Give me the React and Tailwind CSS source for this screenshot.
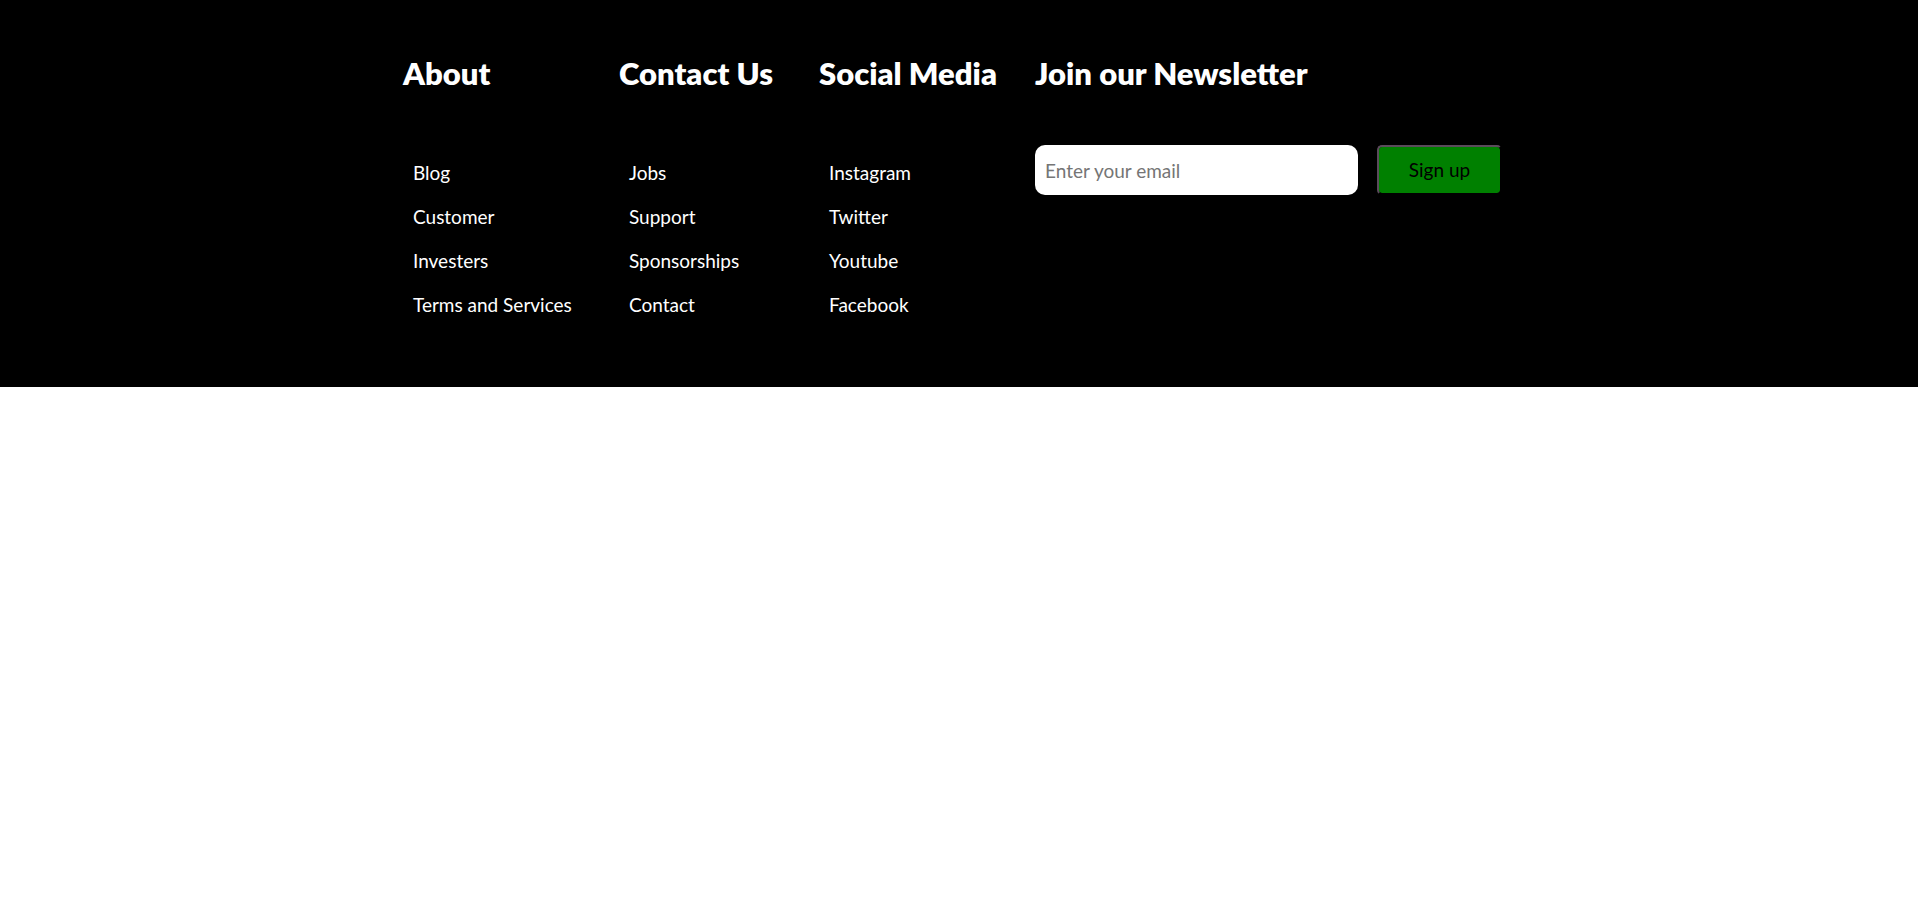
const columns = [
  { title: "About", width: "w-44", links: ["Blog", "Customer", "Investers", "Terms and Services"] },
  { title: "Contact Us", width: "w-40", links: ["Jobs", "Support", "Sponsorships", "Contact"] },
  { title: "Social Media", width: "w-44", links: ["Instagram", "Twitter", "Youtube", "Facebook"] },
];

function Heading({ children }) {
  return <h2 className="text-[31px] leading-10 font-extrabold whitespace-nowrap">{children}</h2>;
}

function LinkColumn({ title, width, links }) {
  return (
    <section className={width}>
      <Heading>{title}</Heading>
      <ul className="mt-[58px]">
        {links.map((link) => (
          <li key={link} className="p-2.5 text-[19px] leading-6 whitespace-nowrap">
            <a href="#">{link}</a>
          </li>
        ))}
      </ul>
    </section>
  );
}

export default function App() {
  return (
    <div className="min-h-screen bg-white font-['Gill_Sans_MT','Gill_Sans',Lato,sans-serif]">
      <footer className="flex flex-wrap justify-center gap-x-10 gap-y-8 bg-black px-5 pt-[53px] pb-[60px] text-white">
        {columns.map((column) => (
          <LinkColumn key={column.title} {...column} />
        ))}
        <section className="pr-[13px]">
          <Heading>Join our Newsletter</Heading>
          <form className="mt-[52px] flex items-start gap-[19px]" onSubmit={(e) => e.preventDefault()}>
            <input
              type="email"
              aria-label="Email"
              placeholder="Enter your email"
              className="h-[50px] w-[323px] rounded-[10px] bg-white px-2.5 text-[19px] text-black placeholder:text-[#757575]"
            />
            <button
              type="submit"
              className="h-[50px] w-[125px] rounded-[5px] border-2 border-t-[#5b4b5b] border-r-black border-b-black border-l-[#5b4b5b] bg-[#008000] bg-clip-padding text-[19px] text-black"
            >
              Sign up
            </button>
          </form>
        </section>
      </footer>
    </div>
  );
}
